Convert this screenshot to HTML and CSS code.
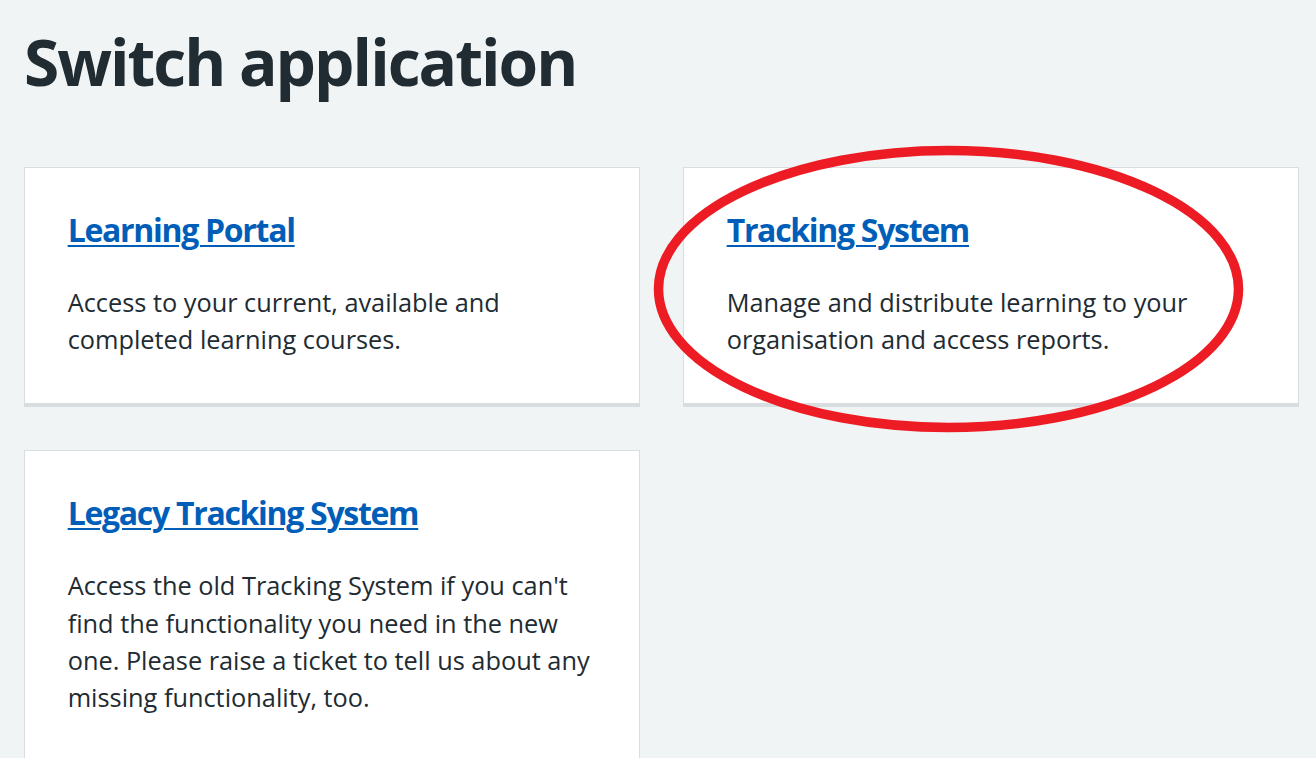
FILE: index.html
```html
<!DOCTYPE html>
<html lang="en">
<head>
<meta charset="utf-8">
<title>Switch application</title>
<link rel="stylesheet" href="styles.css">
</head>
<body>
<main class="page">
  <h1 class="page-title">Switch application</h1>
  <div class="card-grid">
    <div class="card">
      <h2 class="card-heading"><a href="#" class="card-link">Learning Portal</a></h2>
      <p class="card-text">Access to your current, available and completed learning courses.</p>
    </div>
    <div class="card">
      <h2 class="card-heading"><a href="#" class="card-link">Tracking System</a></h2>
      <p class="card-text">Manage and distribute learning to your organisation and access reports.</p>
    </div>
    <div class="card">
      <h2 class="card-heading"><a href="#" class="card-link">Legacy Tracking System</a></h2>
      <p class="card-text">Access the old Tracking System if you can't find the functionality you need in the new one. Please raise a ticket to tell us about any missing functionality, too.</p>
    </div>
  </div>
  <svg class="annotation" width="600" height="296" viewBox="0 0 600 296" aria-hidden="true">
    <ellipse cx="298.5" cy="147" rx="290" ry="138.5" fill="none" stroke="#ed1c24" stroke-width="9.5"/>
  </svg>
</main>
</body>
</html>
```
FILE: styles.css
```css
html, body {
  margin: 0;
  padding: 0;
  background: #f0f4f5;
}

body {
  font-family: "Open Sans", Lato, sans-serif;
  color: #212b32;
  overflow: hidden;
  font-variant-ligatures: none;
}

.page {
  position: relative;
  padding: 25px 0 0 24px;
  min-height: 758px;
  box-sizing: border-box;
}

.page-title {
  margin: 0 0 67px;
  font-size: 64px;
  line-height: 74.67px;
  font-weight: 700;
  letter-spacing: -2px;
  color: #212b32;
}

.card-grid {
  display: grid;
  grid-template-columns: 616px 616px;
  column-gap: 43px;
  row-gap: 43px;
  align-items: start;
}

.card {
  background: #ffffff;
  border: 1px solid #d8dde0;
  border-bottom: 4px solid #d8dde0;
  padding: 41px 42.67px 44.5px;
}

.card-heading {
  margin: 0 0 32.5px;
  font-size: 32px;
  line-height: 42.67px;
  font-weight: 700;
  letter-spacing: -1.3px;
}

.card-link {
  color: #005eb8;
  text-decoration: underline;
  text-decoration-thickness: 1.5px;
  text-underline-offset: 3px;
}

.card-text {
  margin: 0;
  font-size: 25.33px;
  line-height: 37.33px;
}

.annotation {
  position: absolute;
  left: 650px;
  top: 142px;
  pointer-events: none;
}
```
